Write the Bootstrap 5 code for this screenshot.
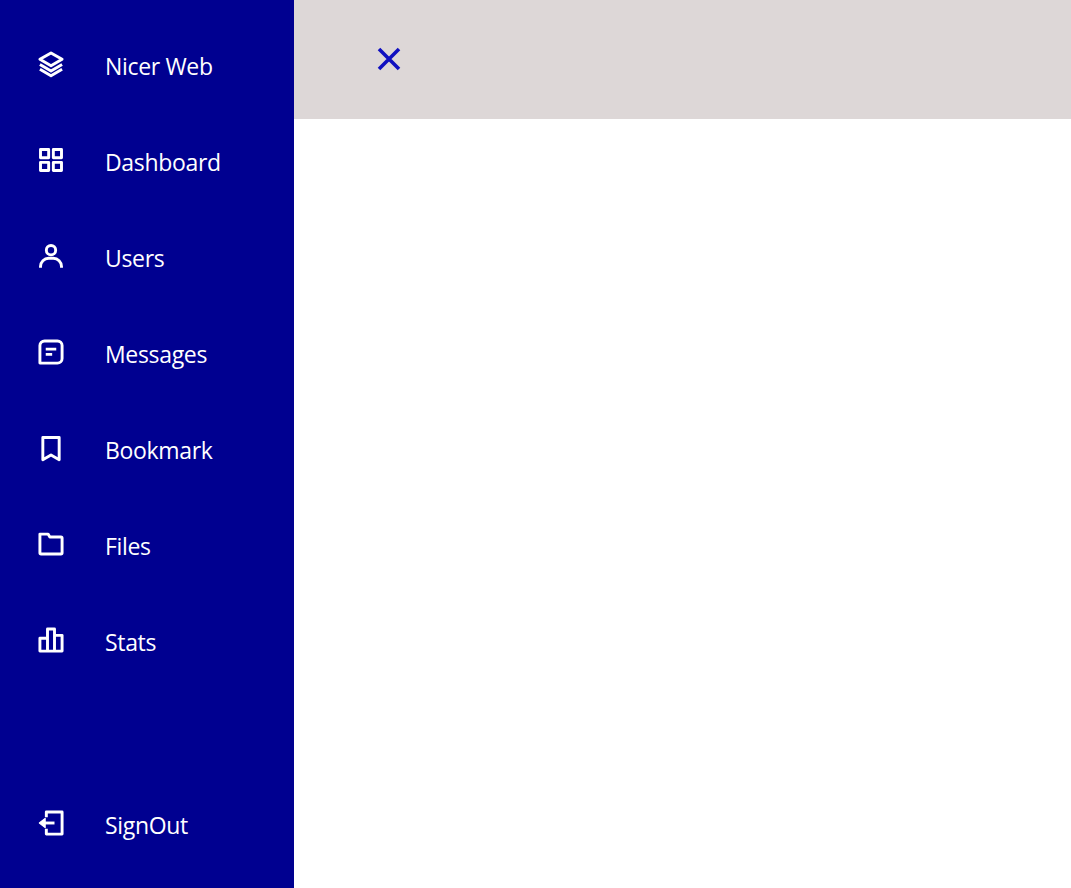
<!DOCTYPE html>
<html lang="en">
<head>
<meta charset="utf-8">
<title>Nicer Web</title>
<link href="https://cdn.jsdelivr.net/npm/bootstrap@5.3.0/dist/css/bootstrap.min.css" rel="stylesheet">
<style>
html,body{height:100%;}
body{font-family:"Open Sans","Noto Sans","Liberation Sans",sans-serif;background:#fff;overflow:hidden;}
.side-rail{width:294px;background:#000090;padding:17px 0 16px;}
.rail-link{height:96px;padding-left:37px;color:#fff;text-decoration:none;font-size:23px;line-height:1;letter-spacing:-.33px;}
.rail-link:hover{color:#fff;}
.rail-link span{position:relative;top:1px;}
.rail-link svg{width:28px;height:28px;margin-right:40px;flex:none;fill:none;stroke:#fff;stroke-width:2.5;stroke-linejoin:round;stroke-linecap:butt;position:relative;top:-1px;}
.top-strip{height:119px;background:#ddd7d7;padding-left:83px;}
.close-x{width:24px;height:24px;fill:none;stroke:#1010c0;stroke-width:3.6;position:relative;top:-1px;}
</style>
</head>
<body>
<div class="d-flex h-100">
  <nav class="side-rail d-flex flex-column">
    <a class="rail-link d-flex align-items-center" href="#">
      <svg viewBox="0 0 24 24"><path d="M12 2.500 21.500 8 12 13.500 2.500 8Z"/><path d="M2.500 12.500 12 18 21.500 12.500"/><path d="M2.500 16.500 12 22 21.500 16.500"/></svg>
      <span>Nicer Web</span></a>
    <a class="rail-link d-flex align-items-center" href="#">
      <svg viewBox="0 0 24 24"><rect x="3" y="3" width="7" height="7"/><rect x="14" y="3" width="7" height="7"/><rect x="3" y="14" width="7" height="7"/><rect x="14" y="14" width="7" height="7"/></svg>
      <span>Dashboard</span></a>
    <a class="rail-link d-flex align-items-center" href="#">
      <svg viewBox="0 0 24 24"><circle cx="12" cy="7" r="4"/><path d="M3 22V21A7 7 0 0 1 10 14H14A7 7 0 0 1 21 21V22"/></svg>
      <span>Users</span></a>
    <a class="rail-link d-flex align-items-center" href="#">
      <svg viewBox="0 0 24 24"><path d="M2.500 21.500V6.500A4 4 0 0 1 6.500 2.500H17.500A4 4 0 0 1 21.500 6.500V17.500A4 4 0 0 1 17.500 21.500Z"/><path d="M7.500 9.500H16.500M7.500 14H13"/></svg>
      <span>Messages</span></a>
    <a class="rail-link d-flex align-items-center" href="#">
      <svg viewBox="0 0 24 24"><path d="M5 3H19V22L12 18 5 22Z"/></svg>
      <span>Bookmark</span></a>
    <a class="rail-link d-flex align-items-center" href="#">
      <svg viewBox="0 0 24 24"><path d="M2.500 19.500A1 1 0 0 0 3.500 20.500H20.500A1 1 0 0 0 21.500 19.500V7A1 1 0 0 0 20.500 6H11L9.500 3.500H2.500Z"/></svg>
      <span>Files</span></a>
    <a class="rail-link d-flex align-items-center" href="#">
      <svg viewBox="0 0 24 24"><path d="M2.500 21.500V10.500H9V21.500M9 21.500V2.500H15V21.500M15 21.500V8H21.500V21.500H2.500Z"/></svg>
      <span>Stats</span></a>
    <a class="rail-link d-flex align-items-center mt-auto" href="#">
      <svg viewBox="0 0 24 24"><path d="M8 7V2.500H21.500V21.500H8V17"/><path d="M15 12H5"/><path d="M7 8 2 12 7 16Z" fill="#fff" stroke-width="1"/></svg>
      <span>SignOut</span></a>
  </nav>
  <main class="flex-grow-1">
    <header class="top-strip d-flex align-items-center">
      <svg class="close-x" viewBox="0 0 24 24"><path d="M2 2 22 22M22 2 2 22"/></svg>
    </header>
  </main>
</div>
<script src="https://cdn.jsdelivr.net/npm/bootstrap@5.3.0/dist/js/bootstrap.bundle.min.js"></script>
</body>
</html>
